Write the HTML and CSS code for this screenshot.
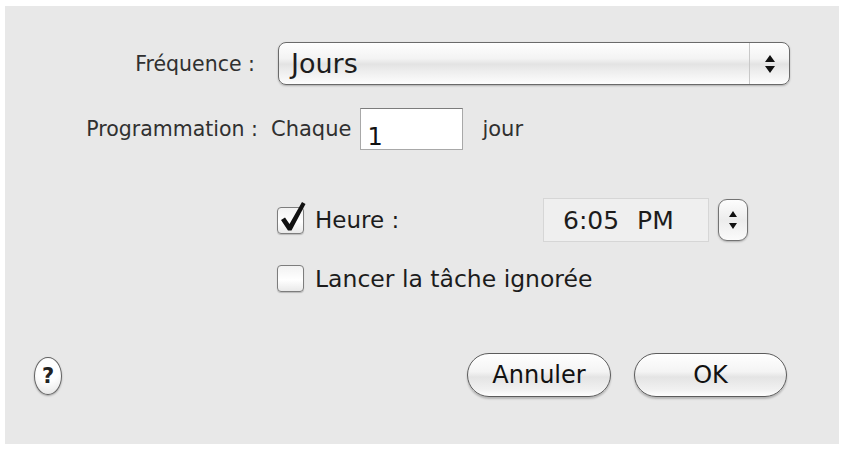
FILE: index.html
```html
<!DOCTYPE html>
<html lang="fr">
<head>
<meta charset="utf-8">
<title>Programmation</title>
<link rel="stylesheet" href="styles.css">
</head>
<body>
<div class="panel">
  <div class="row freq">
    <span class="lbl lbl-freq">Fréquence :</span>
    <div class="popup">
      <span class="popup-text">Jours</span>
      <span class="popup-arrows">
        <svg width="14" height="22" viewBox="0 0 14 22"><path d="M7 2 L12 9 L2 9 Z M2 13 L12 13 L7 20 Z" fill="#111"/></svg>
      </span>
    </div>
  </div>
  <div class="row prog">
    <span class="lbl lbl-prog">Programmation :</span>
    <span class="txt chaque">Chaque</span>
    <span class="field">1</span>
    <span class="txt unit">jour</span>
  </div>
  <div class="row time">
    <span class="check">
      <svg class="tick" viewBox="0 0 27 27"><path d="M4 13 L8 10.5 L12.5 17 L25 -5 L28.5 -3 L14.5 23.5 L11 23.5 Z" fill="#111"/></svg>
    </span>
    <span class="chk-label heure">Heure :</span>
    <span class="timefield">6:05 PM</span>
    <span class="stepper">
      <svg width="12" height="30" viewBox="0 0 12 30"><path d="M6 6 L10 12 L2 12 Z M2 18 L10 18 L6 24 Z" fill="#111"/></svg>
    </span>
  </div>
  <div class="row ignored">
    <span class="check"></span>
    <span class="chk-label lancer">Lancer la tâche ignorée</span>
  </div>
  <div class="row buttons">
    <span class="help">?</span>
    <span class="spacer"></span>
    <button class="btn cancel">Annuler</button>
    <button class="btn ok">OK</button>
  </div>
</div>
</body>
</html>
```
FILE: styles.css
```css
body {
  margin: 0;
  background: #ffffff;
  font-family: "DejaVu Sans", "Noto Sans", sans-serif;
}

.panel {
  margin: 6px 0 0 5px;
  width: 834px;
  height: 438px;
  background: #e8e8e8;
  display: flex;
  flex-direction: column;
}

.row {
  display: flex;
  align-items: center;
}

.lbl {
  font-size: 20.5px;
  color: #303030;
  text-align: right;
}

.freq {
  margin-top: 36px;
  height: 43px;
}

.lbl-freq {
  width: 250px;
  margin-right: 23px;
}

.popup {
  width: 512px;
  height: 43px;
  box-sizing: border-box;
  border: 1.5px solid #6a6a6a;
  border-radius: 8px;
  background: linear-gradient(#fefefe 0%, #f3f3f3 38%, #e3e3e3 52%, #eeeeee 70%, #fdfdfd 100%);
  box-shadow: 0 1px 2px rgba(0, 0, 0, 0.25);
  display: flex;
  align-items: center;
}

.popup-text {
  flex: 1;
  font-size: 27px;
  color: #1c1c1c;
  padding-left: 12px;
}

.popup-arrows {
  width: 39px;
  height: 100%;
  border-left: 1px solid #c8c8c8;
  display: flex;
  align-items: center;
  justify-content: center;
}

.prog {
  margin-top: 23px;
  height: 42px;
}

.lbl-prog {
  width: 253px;
}

.txt {
  font-size: 21px;
  color: #303030;
}

.chaque {
  margin-left: 13px;
}

.field {
  margin-left: 9px;
  width: 103px;
  height: 42px;
  box-sizing: border-box;
  background: #ffffff;
  border: 1px solid #a8a8a8;
  border-top-color: #7c7c7c;
  font-size: 24px;
  line-height: 24px;
  padding: 16px 0 0 6px;
  color: #111;
}

.unit {
  margin-left: 19px;
}

.time {
  margin-top: 48px;
  height: 44px;
  padding-left: 272px;
}

.check {
  position: relative;
  width: 27px;
  height: 27px;
  flex: none;
  box-sizing: border-box;
  border: 1.5px solid #7d7d7d;
  border-radius: 4px;
  background: linear-gradient(#f2f2f2, #ffffff 55%, #e9e9e9);
  box-shadow: 0 1px 1px rgba(0, 0, 0, 0.2);
}

.tick {
  position: absolute;
  left: -1px;
  top: -1px;
  width: 27px;
  height: 27px;
  overflow: visible;
}

.chk-label {
  margin-left: 11px;
  font-size: 23px;
  color: #1c1c1c;
}

.heure {
  width: 228px;
  flex: none;
}

.lancer {
  font-size: 23.5px;
}

.timefield {
  width: 166px;
  height: 44px;
  box-sizing: border-box;
  background: #efefef;
  border: 1px solid #d6d6d6;
  font-size: 25px;
  color: #1c1c1c;
  padding-left: 19px;
  display: flex;
  align-items: center;
  word-spacing: 10px;
}

.stepper {
  margin-left: 9px;
  width: 30px;
  height: 42px;
  box-sizing: border-box;
  border: 1.5px solid #737373;
  border-radius: 9px;
  background: linear-gradient(#fdfdfd, #ececec 50%, #fbfbfb);
  box-shadow: 0 1px 2px rgba(0, 0, 0, 0.25);
  display: flex;
  align-items: center;
  justify-content: center;
}

.ignored {
  margin-top: 23px;
  height: 27px;
  padding-left: 272px;
}

.buttons {
  margin-top: 61px;
  height: 43px;
  padding: 0 52px 0 29px;
}

.help {
  margin-top: 3px;
  width: 28px;
  height: 38px;
  box-sizing: border-box;
  border: 1.5px solid #626262;
  border-radius: 50%;
  background: radial-gradient(circle at 50% 35%, #ffffff 40%, #e2e2e2 100%);
  box-shadow: 0 1px 2px rgba(0, 0, 0, 0.3);
  display: flex;
  align-items: center;
  justify-content: center;
  font-size: 21px;
  font-weight: bold;
  color: #222;
}

.spacer {
  flex: 1;
}

.btn {
  height: 44px;
  box-sizing: border-box;
  border: 1.5px solid #5c5c5c;
  border-radius: 22px;
  background: linear-gradient(#ffffff 0%, #f4f4f4 42%, #e4e4e4 55%, #f1f1f1 85%, #ffffff 100%);
  box-shadow: 0 2px 2px rgba(0, 0, 0, 0.22);
  font-family: "DejaVu Sans", "Noto Sans", sans-serif;
  font-size: 24px;
  color: #111;
  padding: 0;
}

.cancel {
  width: 144px;
}

.ok {
  width: 153px;
  margin-left: 23px;
}
```
